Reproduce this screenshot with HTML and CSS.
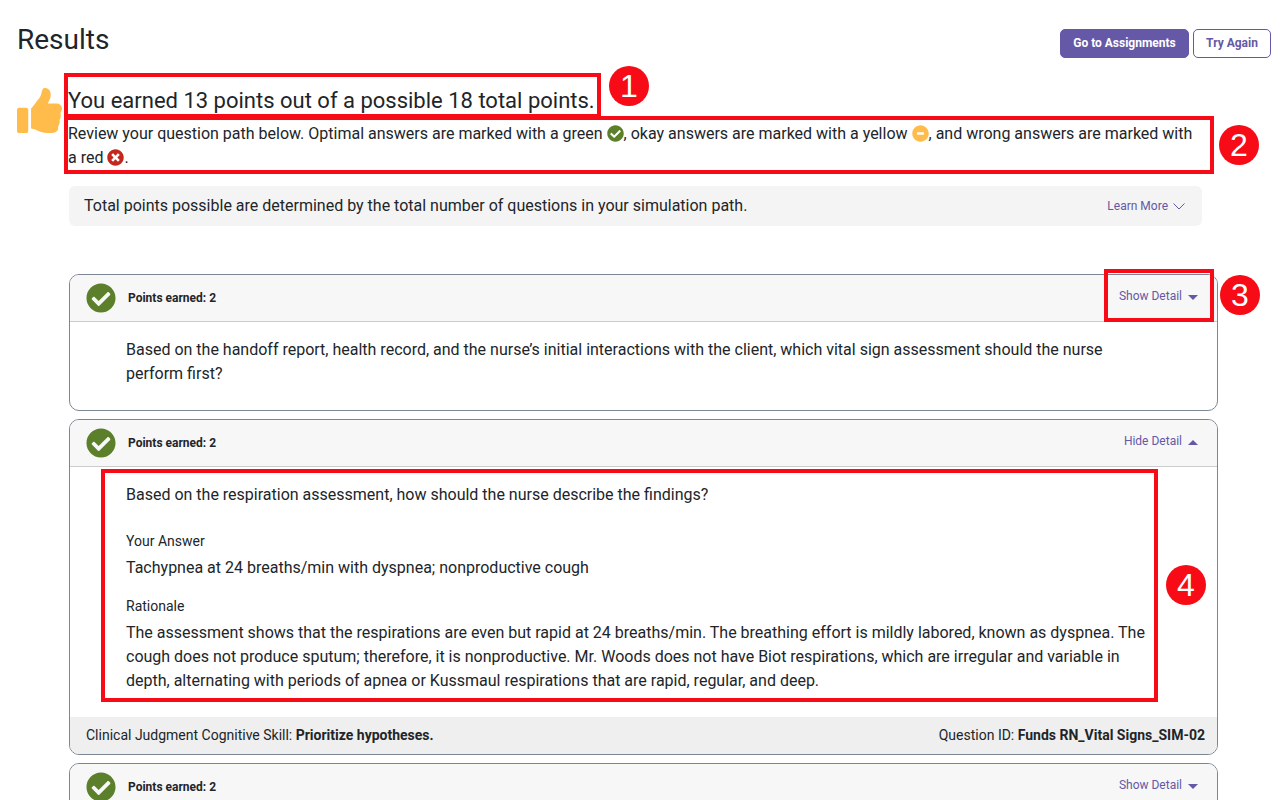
FILE: index.html
```html
<!DOCTYPE html>
<html lang="en">
<head>
    <meta charset="UTF-8">
    <title>Results</title>
    <link rel="stylesheet" href="styles.css">
</head>
<body>
    <svg class="sprites" width="0" height="0">
        <symbol id="check" viewBox="0 0 512 512"><path d="M504 256c0 136.967-111.033 248-248 248S8 392.967 8 256 119.033 8 256 8s248 111.033 248 248zM227.314 387.314l184-184c6.248-6.248 6.248-16.379 0-22.627l-22.627-22.627c-6.248-6.249-16.379-6.249-22.628 0L216 308.118l-70.059-70.059c-6.248-6.248-16.379-6.248-22.628 0l-22.627 22.627c-6.248 6.248-6.248 16.379 0 22.627l104 104c6.249 6.25 16.379 6.25 22.628.001z"/></symbol>
        <symbol id="minus" viewBox="0 0 512 512"><path fill-rule="evenodd" d="M256 8C119 8 8 119 8 256s111 248 248 248 248-111 248-248S393 8 256 8zM164 218h184c7 0 12 5 12 12v52c0 7-5 12-12 12H164c-7 0-12-5-12-12v-52c0-7 5-12 12-12z"/></symbol>
        <symbol id="cross" viewBox="0 0 512 512"><path d="M256 8C119 8 8 119 8 256s111 248 248 248 248-111 248-248S393 8 256 8zm121.6 313.1c4.7 4.7 4.7 12.3 0 17L338 377.6c-4.7 4.7-12.3 4.7-17 0L256 312l-65.1 65.6c-4.7 4.7-12.3 4.7-17 0L134.4 338c-4.7-4.7-4.7-12.3 0-17l65.6-65-65.6-65.1c-4.7-4.7-4.7-12.3 0-17l39.6-39.6c4.7-4.7 12.3-4.7 17 0l65 65.7 65.1-65.6c4.7-4.7 12.3-4.7 17 0l39.6 39.6c4.7 4.7 4.7 12.3 0 17L312 256l65.6 65.1z"/></symbol>
    </svg>

    <div class="page">
        <div class="top-bar">
            <h1>Results</h1>
            <div class="top-buttons">
                <button class="btn btn-solid">Go to Assignments</button>
                <button class="btn btn-outline">Try Again</button>
            </div>
        </div>

        <div class="summary">
            <svg class="thumb" viewBox="0 0 512 512"><path d="M24 224h80c13 0 24 11 24 24v240c0 13-11 24-24 24H24c-13 0-24-11-24-24V248c0-13 11-24 24-24zM384 81.452c0 42.416-25.97 66.208-33.277 94.548h101.723c33.397 0 59.397 27.746 59.553 58.098.084 17.938-7.546 37.249-19.439 49.197l-.11.11c9.836 23.337 8.237 56.037-9.308 79.469 8.681 25.895-.069 57.704-16.382 74.757 4.298 17.598 2.244 32.575-6.148 44.632C440.202 511.587 389.616 512 346.839 512l-2.845-.001c-48.287-.017-87.806-17.598-119.56-31.725-15.957-7.099-36.821-15.887-52.651-16.178-6.54-.12-11.783-5.457-11.783-11.998v-213.77c0-3.2 1.282-6.271 3.558-8.521 39.614-39.144 56.648-80.587 89.117-113.111 14.804-14.832 20.188-37.236 25.393-58.902C282.515 39.293 291.817 0 312 0c24 0 72 8 72 81.452z"/></svg>
            <div class="summary-text">
                <h2>You earned 13 points out of a possible 18 total points.</h2>
                <p>Review your question path below. Optimal answers are marked with a green <svg class="mark green"><use href="#check"/></svg>, okay answers are marked with a yellow <svg class="mark yellow"><use href="#minus"/></svg>, and wrong answers are marked with<br>a red <svg class="mark red"><use href="#cross"/></svg>.</p>
            </div>
        </div>

        <div class="content">
            <div class="info-box">
                <span>Total points possible are determined by the total number of questions in your simulation path.</span>
                <a class="learn-more">Learn More
                    <svg width="12" height="7" viewBox="0 0 12 7"><path d="M.5.5L6 6 11.500.5" fill="none" stroke="#6558a6"/></svg>
                </a>
            </div>

            <div class="card">
                <div class="card-header">
                    <svg class="status green"><use href="#check"/></svg>
                    <span class="points">Points earned: 2</span>
                    <a class="toggle">Show Detail</a>
                    <span class="caret"></span>
                </div>
                <div class="card-body">
                    <p>Based on the handoff report, health record, and the nurse’s initial interactions with the client, which vital sign assessment should the nurse perform first?</p>
                </div>
            </div>

            <div class="card">
                <div class="card-header">
                    <svg class="status green"><use href="#check"/></svg>
                    <span class="points">Points earned: 2</span>
                    <a class="toggle">Hide Detail</a>
                    <span class="caret up"></span>
                </div>
                <div class="card-body detail">
                    <p>Based on the respiration assessment, how should the nurse describe the findings?</p>
                    <div class="label">Your Answer</div>
                    <p>Tachypnea at 24 breaths/min with dyspnea; nonproductive cough</p>
                    <div class="label second">Rationale</div>
                    <p>The assessment shows that the respirations are even but rapid at 24 breaths/min. The breathing effort is mildly labored, known as dyspnea. The cough does not produce sputum; therefore, it is nonproductive. Mr. Woods does not have Biot respirations, which are irregular and variable in depth, alternating with periods of apnea or Kussmaul respirations that are rapid, regular, and deep.</p>
                </div>
                <div class="card-footer">
                    <span>Clinical Judgment Cognitive Skill: <b>Prioritize hypotheses.</b></span>
                    <span>Question ID: <b>Funds RN_Vital Signs_SIM-02</b></span>
                </div>
            </div>

            <div class="card">
                <div class="card-header">
                    <svg class="status green"><use href="#check"/></svg>
                    <span class="points">Points earned: 2</span>
                    <a class="toggle">Show Detail</a>
                    <span class="caret"></span>
                </div>
            </div>
        </div>
    </div>

    <!-- callouts drawn over the page -->
    <div class="callout-box box-1"></div>
    <div class="callout-box box-2"></div>
    <div class="callout-box box-3"></div>
    <div class="callout-box box-4"></div>
    <div class="callout-num num-1">1</div>
    <div class="callout-num num-2">2</div>
    <div class="callout-num num-3">3</div>
    <div class="callout-num num-4">4</div>
</body>
</html>
```

FILE: styles.css
```css
html, body {
    height: 800px;
    overflow: hidden;
}
body {
    margin: 0;
    position: relative;
    background: #fff;
    color: #212529;
    font-family: Roboto, "Liberation Sans", sans-serif;
    font-size: 16px;
    line-height: 24px;
}
p {
    margin: 0;
}
.sprites {
    position: absolute;
}
.page {
    padding: 23px 13px 0 17px;
}
.top-bar {
    display: flex;
    justify-content: space-between;
    align-items: flex-start;
}
h1 {
    margin: 0;
    font-size: 28px;
    font-weight: 400;
    line-height: 34px;
}
.top-buttons {
    display: flex;
    gap: 4px;
    margin-top: 6px;
}
.btn {
    height: 29px;
    padding: 0 0 2px;
    border-radius: 5px;
    font-family: inherit;
    font-size: 12px;
    font-weight: 700;
}
.btn-solid {
    width: 129px;
    border: 1px solid #6558a6;
    background: #6558a6;
    color: #fff;
}
.btn-outline {
    width: 78px;
    border: 1px solid #6558a6;
    background: #fff;
    color: #6558a6;
}

.summary {
    display: flex;
    gap: 6px;
    margin-top: 26px;
}
.thumb {
    flex: none;
    width: 45px;
    height: 45px;
    margin-top: 4px;
    fill: #ffbc4b;
}
.summary-text {
    width: 1136px;
}
h2 {
    margin: 0 0 5px;
    padding-top: 1px;
    font-size: 22px;
    font-weight: 400;
    line-height: 32px;
}
.mark {
    width: 17px;
    height: 17px;
    vertical-align: -3px;
}
.green {
    fill: #5b7f2a;
}
.yellow {
    fill: #ffbc4b;
}
.red {
    fill: #c4281c;
}

.content {
    width: 1149px;
    margin-left: 52px;
}
.info-box {
    display: flex;
    justify-content: space-between;
    align-items: center;
    box-sizing: border-box;
    width: 1133px;
    height: 40px;
    margin: 16px 0 48px;
    padding: 0 17px 0 15px;
    border-radius: 6px;
    background: #f4f4f4;
}
.learn-more {
    display: flex;
    align-items: center;
    gap: 5px;
    color: #6558a6;
    font-size: 12px;
}

.card {
    margin-bottom: 8px;
    border: 1px solid #7b8794;
    border-radius: 10px;
    overflow: hidden;
}
.card-header {
    display: flex;
    align-items: center;
    height: 46px;
    padding: 0 19px 0 16px;
    border-bottom: 1px solid #ccc;
    background: #f7f7f7;
}
.status {
    flex: none;
    width: 30px;
    height: 30px;
}
.points {
    margin-left: 12px;
    font-size: 12px;
    font-weight: 700;
}
.toggle {
    margin: 0 0 5px auto;
    color: #6558a6;
    font-size: 12px;
}
.caret {
    margin: 0 0 2px 6px;
    border-top: 5px solid #6558a6;
    border-left: 5px solid transparent;
    border-right: 5px solid transparent;
}
.caret.up {
    border-top: 0;
    border-bottom: 5px solid #6558a6;
}
.card-body {
    padding: 16px 56px 24px;
}
.label {
    margin: 24px 0 4px;
    font-size: 14px;
    line-height: 21px;
}
.label.second {
    margin-top: 16px;
}
.card-footer {
    display: flex;
    justify-content: space-between;
    align-items: center;
    height: 35px;
    padding: 0 12px 2px 16px;
    background: #efefef;
    font-size: 14px;
}

.callout-box {
    position: absolute;
    box-sizing: border-box;
    border: 4px solid #f70b17;
}
.box-1 {
    left: 64px;
    top: 73px;
    width: 537px;
    height: 45px;
}
.box-2 {
    left: 64px;
    top: 116px;
    width: 1150px;
    height: 58px;
}
.box-3 {
    left: 1104px;
    top: 269px;
    width: 110px;
    height: 53px;
}
.box-4 {
    left: 101px;
    top: 469px;
    width: 1057px;
    height: 233px;
}
.callout-num {
    position: absolute;
    width: 40px;
    height: 40px;
    border-radius: 50%;
    background: #f70b17;
    color: #fff;
    font-family: "Liberation Sans", sans-serif;
    font-size: 32px;
    line-height: 40px;
    text-align: center;
}
.num-1 {
    left: 609px;
    top: 66px;
}
.num-2 {
    left: 1219px;
    top: 125px;
}
.num-3 {
    left: 1220px;
    top: 275px;
}
.num-4 {
    left: 1166px;
    top: 565px;
}
```
